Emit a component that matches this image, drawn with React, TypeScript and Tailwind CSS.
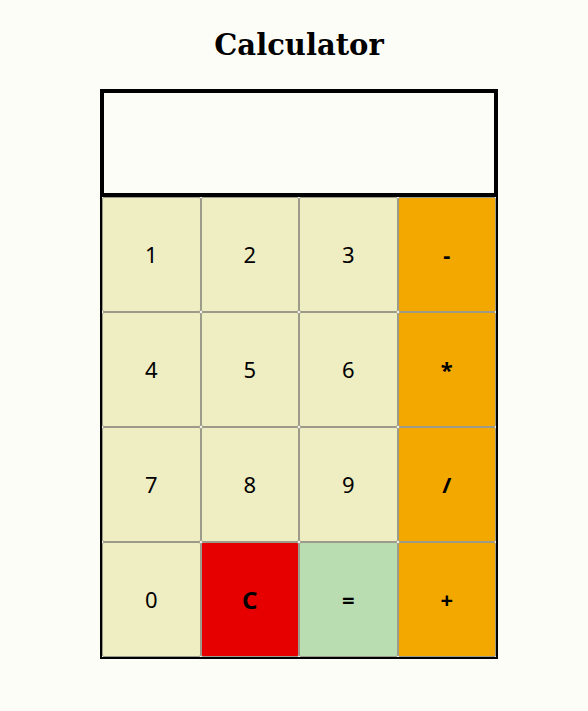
import React from "react";

const keys: { label: string; kind: "num" | "op" | "clear" | "eq" }[] = [
  { label: "1", kind: "num" },
  { label: "2", kind: "num" },
  { label: "3", kind: "num" },
  { label: "-", kind: "op" },
  { label: "4", kind: "num" },
  { label: "5", kind: "num" },
  { label: "6", kind: "num" },
  { label: "*", kind: "op" },
  { label: "7", kind: "num" },
  { label: "8", kind: "num" },
  { label: "9", kind: "num" },
  { label: "/", kind: "op" },
  { label: "0", kind: "num" },
  { label: "C", kind: "clear" },
  { label: "=", kind: "eq" },
  { label: "+", kind: "op" },
];

function cls(kind: string) {
  switch (kind) {
    case "num":
      return "bg-[#efedc2] font-normal text-[22px]";
    case "op":
      return "bg-[#f3a800] font-bold text-[22px]";
    case "clear":
      return "bg-[#e60000] font-bold text-[24px]";
    default:
      return "bg-[#b9dcb0] font-bold text-[22px]";
  }
}

export default function App() {
  return (
    <div className="min-h-[711px] w-[588px] bg-[#fdfdf7] flex flex-col items-center">
      <h1
        className="mt-[26px] ml-[10px] text-[29px] leading-[38px] font-bold text-black"
        style={{ fontFamily: '"DejaVu Serif", serif' }}
      >
        Calculator
      </h1>
      <div className="mt-[25px] w-[398px] ml-[10px]">
        <div className="h-[108px] border-4 border-black bg-[#fdfdf8]" />
        <div
          className="grid grid-cols-4 border-x-2 border-b-2 border-black"
          style={{ fontFamily: '"Noto Sans", sans-serif' }}
        >
          {keys.map((k) => (
            <button
              key={k.label}
              className={`h-[115px] border border-[#9c9a88] rounded-[2px] text-black flex items-center justify-center ${cls(k.kind)}`}
            >
              {k.label}
            </button>
          ))}
        </div>
      </div>
    </div>
  );
}
